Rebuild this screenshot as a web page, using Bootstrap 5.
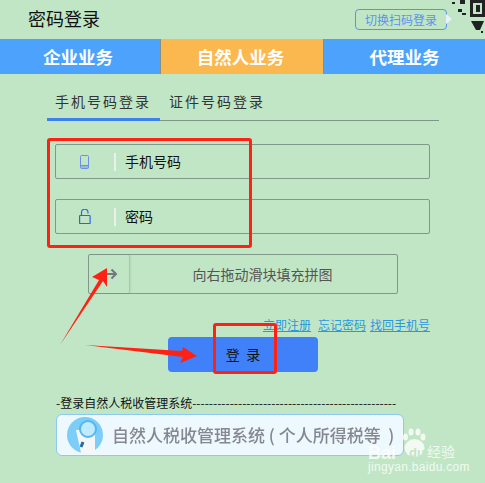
<!DOCTYPE html>
<html lang="zh-CN">
<head>
    <meta charset="UTF-8">
    <meta name="viewport" content="width=device-width, initial-scale=1.0">
    <title>密码登录</title>
    <link href="https://cdn.jsdelivr.net/npm/bootstrap@5.3.0/dist/css/bootstrap.min.css" rel="stylesheet">
    <style>
        html, body { height: 100%; overflow: hidden; }
        body { background: #c1e6c5; font-family: "Noto Sans CJK SC", "Liberation Sans", sans-serif; color: #111; }
        .login-page { position: relative; width: 485px; height: 483px; overflow: hidden; }
        .top-bar { height: 39px; padding: 0 38px 0 28px; }
        .top-title { font-size: 18px; line-height: 1; color: #111; margin-bottom: 3px; }
        .scan-btn { position: relative; width: 92px; height: 21px; border: 1px solid #5b93ea; border-radius: 4px; font-size: 12px; line-height: 19px; text-align: center; color: #5b93ea; }
        .scan-btn::after { content: ""; position: absolute; left: 90px; top: 4px; border-left: 6px solid #e8f1fc; border-top: 5px solid transparent; border-bottom: 5px solid transparent; }
        .qr-corner { position: absolute; left: 452px; top: 0; }
        .biz-tabs { height: 35px; gap: 1px; background: #8b8f7f; }
        .biz-tab { flex: none; width: 161px; background: #4da3fb; color: #fff; font-size: 17.5px; font-weight: 700; line-height: 35px; text-align: center; }
        .biz-tab.first { width: 160px; padding-right: 4px; }
        .biz-tab.on { width: 162px; background: #fbb84f; padding-right: 3px; }
        .sub-tabs { height: 47px; margin: 0 46px 0 47px; border-bottom: 1px solid #80958a; }
        .sub-tab { height: 47px; padding-top: 17px; font-size: 14px; line-height: 20px; letter-spacing: 2px; color: #333; white-space: nowrap; }
        .sub-tab.on { width: 113px; padding-left: 8px; border-bottom: 3px solid #3f80ef; margin-right: 9px; }
        .field-box { width: 375px; height: 35px; margin: 23px 0 0 55px; border: 1px solid #81988a; border-radius: 2px; }
        .field-box.next { margin-top: 20px; }
        .field-icon { width: 58px; }
        .field-sep { width: 2px; height: 18px; background: #e8f2ea; margin-right: 9px; }
        .field-text { font-size: 14px; color: #111; }
        .slide-box { width: 310px; height: 40px; margin: 20px 0 0 88px; border: 1px solid #81988a; border-radius: 2px; }
        .slide-knob { width: 41px; height: 38px; padding-right: 11px; border-right: 1px solid #a8c8ac; border-radius: 2px; box-shadow: 1px 0 2px rgba(0,0,0,.08); }
        .slide-text { font-size: 14px; color: #555; padding-right: 2px; }
        .link-row { height: 43px; padding: 21px 55px 0 0; font-size: 12px; line-height: 20px; }
        .link-row a { color: #2b97e0; }
        .link-row a.gap-wide { margin-right: 7px; }
        .link-row a.gap-thin { margin-right: 4px; }
        .login-btn { width: 150px; height: 35px; margin-left: 168px; background: #4080f8; border: 0; border-radius: 4px; font-size: 14px; color: #111; padding: 0; }
        .sys-title { margin: 22px 0 0 56px; font-size: 12px; line-height: 18px; color: #111; white-space: nowrap; }
        .sys-banner { width: 348px; height: 42px; margin: 2px 0 0 56px; padding-left: 10px; background: #eef8ff; border: 1px solid #8cc8f5; border-radius: 6px; }
        .sys-text { font-size: 17px; font-weight: 500; color: #85898d; white-space: pre; margin-left: 9px; filter: blur(.4px); }
        .red-box { position: absolute; border: 3px solid #ff2114; border-radius: 3px; }
        .red-a { left: 47px; top: 138px; width: 205px; height: 110px; }
        .red-b { left: 213px; top: 323px; width: 64px; height: 51px; }
        .marks { position: absolute; left: 0; top: 0; }
        .wm { position: absolute; left: 365px; top: 428px; width: 100px; height: 50px; color: rgba(255,255,255,.8); }
        .wm-paw { position: absolute; left: 37px; top: 0; }
        .wm-bai { position: absolute; left: 3px; top: 16px; font: 700 18px/18px "Liberation Sans", sans-serif; white-space: nowrap; }
        .wm-du { position: absolute; left: 44px; top: 18px; font: 700 13px/14px "Liberation Sans", sans-serif; color: #c1e6c5; white-space: nowrap; }
        .wm-cn { position: absolute; left: 62px; top: 15px; font-size: 14px; line-height: 16px; white-space: nowrap; }
        .wm-url { position: absolute; left: 3px; top: 33px; font: 12px/12px "Liberation Sans", sans-serif; letter-spacing: .3px; white-space: nowrap; }
    </style>
</head>
<body>
    <div class="login-page">
        <!-- Header -->
        <div class="top-bar d-flex align-items-center justify-content-between">
            <div class="top-title">密码登录</div>
            <div class="scan-btn">切换扫码登录</div>
        </div>
        <svg class="qr-corner" width="33" height="36" viewBox="0 0 33 36">
            <path fill="#222" fill-rule="evenodd" d="M18 0h15v17H18zM21 3v11h9V3zM24 5h4v7h-4zM0 2h3v2H0zM6 9h4v3H6zM10 13h4v2H10zM8 0h5v4H8zM19 21h13l-4 9h-4zM29 31h2v2h-2z"/>
        </svg>

        <!-- Business tabs -->
        <div class="biz-tabs d-flex">
            <div class="biz-tab first">企业业务</div>
            <div class="biz-tab on">自然人业务</div>
            <div class="biz-tab">代理业务</div>
        </div>

        <!-- Login type -->
        <div class="sub-tabs d-flex">
            <div class="sub-tab on">手机号码登录</div>
            <div class="sub-tab">证件号码登录</div>
        </div>

        <!-- Fields -->
        <div class="field-box d-flex align-items-center">
            <div class="field-icon d-flex justify-content-center">
                <svg width="10" height="14" viewBox="0 0 10 14" fill="none" stroke="#6f8fe6"><rect x=".5" y=".5" width="8" height="13" rx="1"/><path d="M.5 10.5h8M.5 12h8"/></svg>
            </div>
            <div class="field-sep"></div>
            <div class="field-text">手机号码</div>
        </div>
        <div class="field-box next d-flex align-items-center">
            <div class="field-icon d-flex justify-content-center">
                <svg width="12" height="15" viewBox="0 0 12 15" fill="none" stroke="#2f62ea" stroke-width="1.2"><rect x=".6" y="6.5" width="10.500" height="8" rx=".5"/><path d="M2.500 6.500V3.500a3.200 3.200 0 0 1 6.500 0v1"/></svg>
            </div>
            <div class="field-sep"></div>
            <div class="field-text">密码</div>
        </div>

        <!-- Slider -->
        <div class="slide-box d-flex">
            <div class="slide-knob d-flex align-items-center justify-content-end">
                <svg width="14" height="12" viewBox="0 0 14 12" fill="none" stroke="#707880" stroke-width="2"><path d="M0 6h12M7.500 1.500 12 6l-4.500 4.500"/></svg>
            </div>
            <div class="slide-text flex-grow-1 d-flex align-items-center justify-content-center">向右拖动滑块填充拼图</div>
        </div>

        <!-- Links -->
        <div class="link-row d-flex justify-content-end">
            <a class="gap-wide" href="#">立即注册</a>
            <a class="gap-thin" href="#">忘记密码</a>
            <a href="#">找回手机号</a>
        </div>

        <button class="login-btn d-block" type="button">登&nbsp;&nbsp;录</button>

        <!-- System entry -->
        <div class="sys-title">-登录自然人税收管理系统-------------------------------------------------</div>
        <div class="sys-banner d-flex align-items-center">
            <svg width="36" height="36" viewBox="0 0 36 36">
                <circle cx="18" cy="18" r="18" fill="#7ccdf8"/>
                <path fill="#f4f6f8" d="M9 13h19v23H14z"/>
                <circle cx="21" cy="12" r="8" fill="#bfeaff" stroke="#52b8ee" stroke-width="2"/>
                <path stroke="#1d6f9f" stroke-width="3" d="M14 30l2-5"/>
            </svg>
            <div class="sys-text">自然人税收管理系统 ( 个人所得税等  )</div>
        </div>

        <!-- Screenshot annotations -->
        <div class="red-box red-a"></div>
        <div class="red-box red-b"></div>
        <svg class="marks" width="485" height="483" viewBox="0 0 485 483">
            <path fill="#ff2114" d="M60 345 99 280 92 277 107 268 107 287 103 281z"/>
            <path fill="#ff2114" d="M85 345 182 351 183 347 197 356 180 363 183 357z"/>
        </svg>

        <!-- Watermark -->
        <div class="wm">
            <svg class="wm-paw" width="24" height="30" viewBox="0 0 24 30" fill="rgba(255,255,255,.8)"><ellipse cx="3.500" cy="9" rx="2.500" ry="3.500"/><ellipse cx="9" cy="4" rx="2.500" ry="3.500"/><ellipse cx="16" cy="4" rx="2.500" ry="3.500"/><ellipse cx="21" cy="9" rx="2.500" ry="3.500"/><ellipse cx="12.500" cy="20" rx="10" ry="9"/></svg>
            <div class="wm-bai">Bai</div>
            <div class="wm-du">du</div>
            <div class="wm-cn">经验</div>
            <div class="wm-url">jingyan.baidu.com</div>
        </div>
    </div>
    <script src="https://cdn.jsdelivr.net/npm/bootstrap@5.3.0/dist/js/bootstrap.bundle.min.js"></script>
</body>
</html>
